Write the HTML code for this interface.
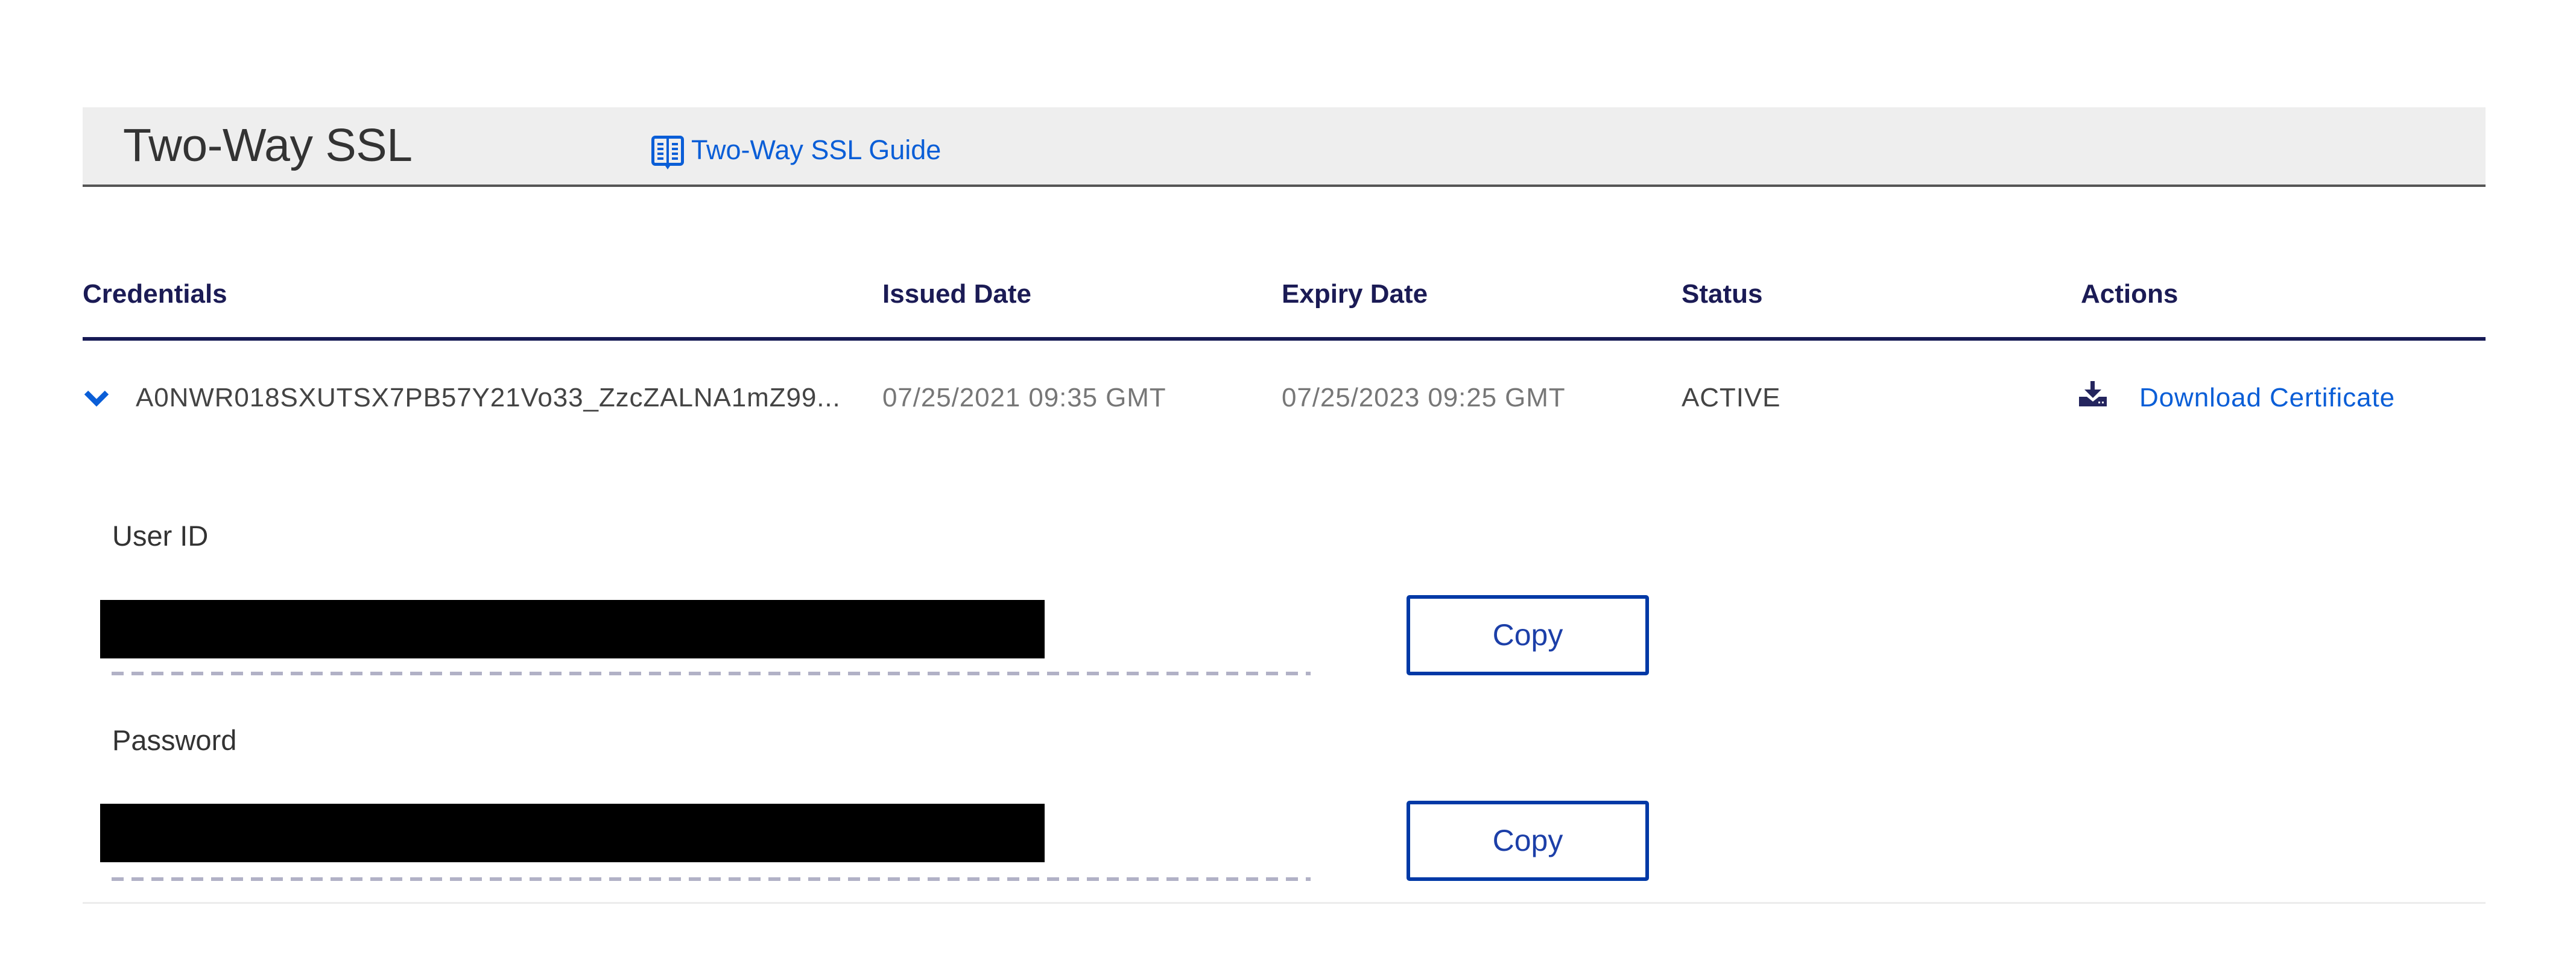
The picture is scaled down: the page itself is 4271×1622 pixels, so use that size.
<!DOCTYPE html>
<html><head><meta charset="utf-8"><style>
html,body{margin:0;padding:0;background:#fff;width:4271px;height:1622px;overflow:hidden;position:relative;font-family:"Liberation Sans",Arial,sans-serif}
.a{position:absolute;white-space:nowrap}
.hd{font-size:44px;font-weight:bold;color:#1b1b55;top:463px}
.cell{font-size:44px;top:635px;letter-spacing:0.9px}
.dash{position:absolute;height:6px;width:1988px;left:185px;background:repeating-linear-gradient(90deg,#b1b1c6 0 20px,transparent 20px 33px)}
.btn{position:absolute;left:2332px;width:390px;height:121px;border:6px solid #0039a6;border-radius:5px;color:#1c3fa8;font-size:50px;text-align:center;line-height:121px;font-weight:300}
.blk{position:absolute;left:166px;width:1566px;background:#000}
.lbl{font-size:47px;color:#333}
</style></head><body>
<div class="a" style="left:137px;top:178px;width:3984px;height:128px;background:#eeeeee;border-bottom:4px solid #555"></div>
<div class="a" style="left:204px;top:197px;font-size:77px;color:#333;font-weight:300;letter-spacing:-0.5px">Two-Way SSL</div>
<svg class="a" style="left:1080px;top:225px" width="54" height="58" viewBox="0 0 54 58"><rect x="2.5" y="2.5" width="49" height="45" rx="4" fill="none" stroke="#0a5ed7" stroke-width="5"/><line x1="27" y1="3" x2="27" y2="48" stroke="#0a5ed7" stroke-width="4"/><path d="M21 47 L27 56 L33 47Z" fill="#0a5ed7"/><g stroke="#0a5ed7" stroke-width="4"><line x1="10" y1="14" x2="20" y2="14"/><line x1="10" y1="22" x2="20" y2="22"/><line x1="10" y1="30" x2="20" y2="30"/><line x1="10" y1="38" x2="20" y2="38"/><line x1="34" y1="14" x2="44" y2="14"/><line x1="34" y1="22" x2="44" y2="22"/><line x1="34" y1="30" x2="44" y2="30"/><line x1="34" y1="38" x2="44" y2="38"/></g></svg>
<div class="a" style="left:1146px;top:223px;font-size:45px;color:#0a5ed7">Two-Way SSL Guide</div>
<div class="a hd" style="left:137px">Credentials</div>
<div class="a hd" style="left:1463px">Issued Date</div>
<div class="a hd" style="left:2125px">Expiry Date</div>
<div class="a hd" style="left:2788px">Status</div>
<div class="a hd" style="left:3450px">Actions</div>
<div class="a" style="left:137px;top:559px;width:3984px;height:6px;background:#161a55"></div>
<svg class="a" style="left:138px;top:645px" width="44" height="32" viewBox="0 0 44 32"><path d="M5 6 L22 23 L39 6" fill="none" stroke="#0a5ed7" stroke-width="9"/></svg>
<div class="a cell" style="left:225px;color:#444">A0NWR018SXUTSX7PB57Y21Vo33_ZzcZALNA1mZ99...</div>
<div class="a cell" style="left:1463px;color:#777">07/25/2021 09:35 GMT</div>
<div class="a cell" style="left:2125px;color:#777">07/25/2023 09:25 GMT</div>
<div class="a cell" style="left:2788px;color:#444">ACTIVE</div>
<svg class="a" style="left:3447px;top:632px" width="46" height="42" viewBox="0 0 46 42"><rect x="19" y="0" width="7" height="16" fill="#24255e"/><path d="M9 14 L37 14 L23 28Z" fill="#24255e"/><path d="M0 26 L13 26 L23 34 L33 26 L46 26 L46 42 L0 42Z" fill="#24255e"/><rect x="32" y="34" width="3" height="3" fill="#fff"/><rect x="38" y="34" width="3" height="3" fill="#fff"/></svg>
<div class="a cell" style="left:3547px;color:#0a5ed7">Download Certificate</div>
<div class="a lbl" style="left:186px;top:861px">User ID</div>
<div class="blk" style="top:995px;height:97px"></div>
<div class="dash" style="top:1114px"></div>
<div class="btn" style="top:987px">Copy</div>
<div class="a lbl" style="left:186px;top:1200px">Password</div>
<div class="blk" style="top:1333px;height:97px"></div>
<div class="dash" style="top:1455px"></div>
<div class="btn" style="top:1328px">Copy</div>
<div class="a" style="left:137px;top:1496px;width:3984px;height:3px;background:#ececec"></div>
</body></html>
